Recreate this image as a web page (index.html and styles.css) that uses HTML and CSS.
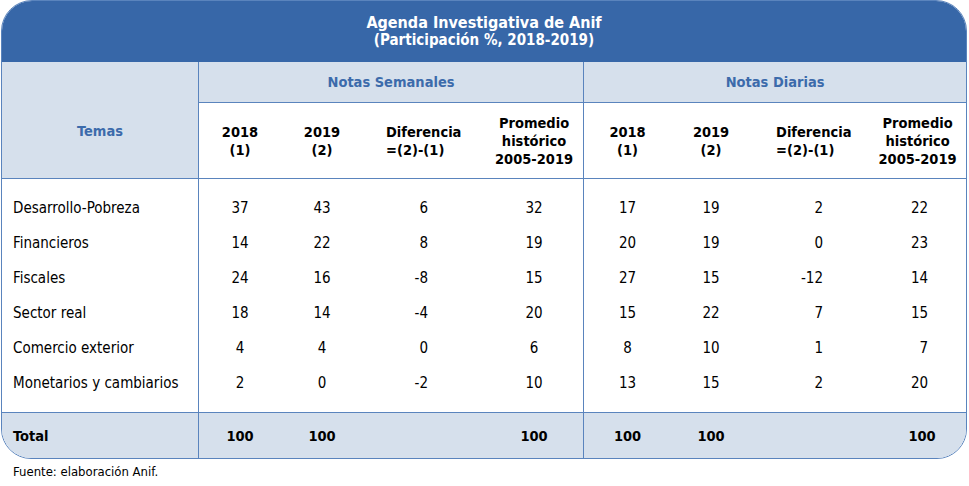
FILE: index.html
```html
<!DOCTYPE html>
<html lang="es">
<head>
<meta charset="utf-8">
<title>Agenda Investigativa de Anif</title>
<link rel="stylesheet" href="styles.css">
</head>
<body>
<div class="box">
  <div class="title">
    <div class="t1">Agenda Investigativa de Anif</div>
    <div class="t2">(Participación %, 2018-2019)</div>
  </div>
  <table class="grid">
    <colgroup>
      <col class="c-tema">
      <col class="c-y1"><col class="c-y2"><col class="c-dif"><col class="c-prom">
      <col class="c-y1d"><col class="c-y2d"><col class="c-difd"><col class="c-promd">
    </colgroup>
    <thead>
      <tr class="h1">
        <th rowspan="2" class="temas sep">Temas</th>
        <th colspan="4" class="group sep">Notas Semanales</th>
        <th colspan="4" class="group">Notas Diarias</th>
      </tr>
      <tr class="h2">
        <th>2018<br>(1)</th>
        <th>2019<br>(2)</th>
        <th class="hdif">Diferencia<br>=(2)-(1)</th>
        <th class="sep">Promedio<br>histórico<br>2005-2019</th>
        <th>2018<br>(1)</th>
        <th>2019<br>(2)</th>
        <th class="hdif hdifd">Diferencia<br>=(2)-(1)</th>
        <th class="hpromd">Promedio<br>histórico<br>2005-2019</th>
      </tr>
    </thead>
    <tbody>
      <tr class="first"><td class="tema sep">Desarrollo-Pobreza</td><td>37</td><td>43</td><td class="dif">6</td><td class="sep">32</td><td>17</td><td>19</td><td class="difd">2</td><td class="promd">22</td></tr>
      <tr><td class="tema sep">Financieros</td><td>14</td><td>22</td><td class="dif">8</td><td class="sep">19</td><td>20</td><td>19</td><td class="difd">0</td><td class="promd">23</td></tr>
      <tr><td class="tema sep">Fiscales</td><td>24</td><td>16</td><td class="dif">-8</td><td class="sep">15</td><td>27</td><td>15</td><td class="difd">-12</td><td class="promd">14</td></tr>
      <tr><td class="tema sep">Sector real</td><td>18</td><td>14</td><td class="dif">-4</td><td class="sep">20</td><td>15</td><td>22</td><td class="difd">7</td><td class="promd">15</td></tr>
      <tr><td class="tema sep">Comercio exterior</td><td>4</td><td>4</td><td class="dif">0</td><td class="sep">6</td><td>8</td><td>10</td><td class="difd">1</td><td class="promd">7</td></tr>
      <tr class="last"><td class="tema sep">Monetarios y cambiarios</td><td>2</td><td>0</td><td class="dif">-2</td><td class="sep">10</td><td>13</td><td>15</td><td class="difd">2</td><td class="promd">20</td></tr>
    </tbody>
    <tfoot>
      <tr class="total"><td class="tema sep">Total</td><td>100</td><td>100</td><td></td><td class="sep">100</td><td>100</td><td>100</td><td></td><td class="ptot">100</td></tr>
    </tfoot>
  </table>
</div>
<p class="source">Fuente: elaboración Anif.</p>
</body>
</html>
```

FILE: styles.css
```css
html, body {
  margin: 0;
  padding: 0;
  background: #ffffff;
}
body {
  font-family: "DejaVu Sans Condensed", "DejaVu Sans", sans-serif;
  color: #000000;
}
.box {
  margin-left: 1px;
  width: 966px;
  box-sizing: border-box;
  border: 1px solid #5a84bd;
  border-radius: 31px 31px 30px 30px;
  overflow: hidden;
  background: #ffffff;
}
.title {
  height: 61px;
  background: #3767a8;
  color: #ffffff;
  font-weight: bold;
  text-align: center;
  display: flex;
  flex-direction: column;
  justify-content: center;
  padding-bottom: 2px;
  box-sizing: border-box;
}
.t1 {
  font-size: 16px;
  line-height: 19px;
}
.t2 {
  font-size: 15px;
  line-height: 17px;
}
.grid {
  width: 964px;
  table-layout: fixed;
  border-collapse: separate;
  border-spacing: 0;
}
.c-tema { width: 197px; }
.c-y1 { width: 82px; }
.c-y2 { width: 82px; }
.c-dif { width: 122px; }
.c-prom { width: 99px; }
.c-y1d { width: 87px; }
.c-y2d { width: 80px; }
.c-difd { width: 123px; }
.c-promd { width: 92px; }

th, td {
  padding: 0;
  text-align: center;
  vertical-align: middle;
  box-sizing: border-box;
}
.sep {
  border-right: 1px solid #5a84bd;
}
th {
  font-size: 14.5px;
  line-height: 18px;
  font-weight: bold;
}
.h1 th {
  height: 41px;
  background: #d6e0ec;
}
.h1 .group {
  color: #3c6bab;
  border-bottom: 1px solid #5a84bd;
}
.h1 .temas {
  color: #3c6bab;
  border-bottom: 1px solid #5a84bd;
  padding-top: 22px;
}
.h2 th {
  height: 76px;
  background: #ffffff;
  border-bottom: 1px solid #5a84bd;
}
.h2 .hdif {
  text-align: left;
  padding-left: 23px;
}
.h2 .hdifd {
  padding-left: 25px;
}
.h2 .hpromd {
  padding-right: 5px;
}
td {
  font-size: 15px;
  height: 35px;
}
.tema {
  text-align: left;
  padding-left: 11px;
}
.dif {
  text-align: right;
  padding-right: 57px;
}
.difd {
  text-align: right;
  padding-right: 51px;
}
.promd {
  text-align: right;
  padding-right: 38px;
}
tbody tr.first td {
  height: 46px;
  padding-top: 11px;
}
tbody tr.last td {
  height: 47px;
  padding-bottom: 12px;
}
.total td {
  height: 46px;
  background: #d6e0ec;
  border-top: 1px solid #5a84bd;
  font-weight: bold;
  font-size: 14.5px;
}
.total .ptot {
  padding-left: 4px;
}
.source {
  margin: 0;
  padding-left: 13px;
  font-size: 13px;
  line-height: 26px;
}
```
